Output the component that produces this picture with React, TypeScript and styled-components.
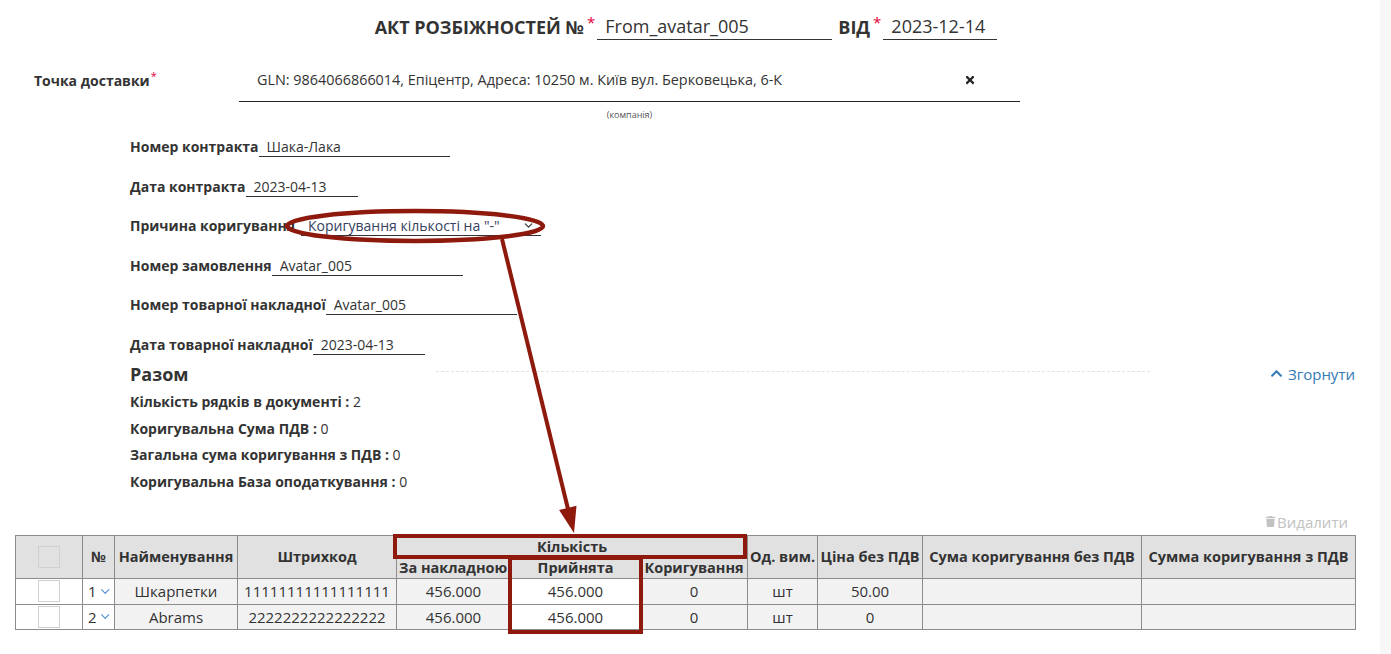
import React from "react";
import styled, { createGlobalStyle } from "styled-components";
import { FaTimes, FaChevronUp, FaTrash } from "react-icons/fa";
import { ChevronDown } from "lucide-react";

const Global = createGlobalStyle`
  html, body { margin: 0; padding: 0; background: #fff; }
  body { font-family: "Open Sans", "Noto Sans", sans-serif; color: #333; font-size: 14px; }
  * { box-sizing: border-box; }
`;

const Shell = styled.div`
  display: flex;
  width: 1391px;
  height: 654px;
  overflow: hidden;
`;

const Main = styled.div`
  position: relative;
  width: 1380px;
  height: 654px;
`;

const ScrollTrack = styled.div`
  width: 11px;
  height: 654px;
  background: #f7f7f8;
`;

const TitleRow = styled.div`
  display: flex;
  justify-content: center;
  align-items: flex-end;
  height: 28px;
  margin-top: 12px;
  padding-right: 8px;
`;

const TitleText = styled.h1`
  margin: 0;
  font-size: 18px;
  font-weight: 700;
  line-height: 26px;
  color: #333;
  white-space: nowrap;
`;

const TitleStar = styled.span`
  color: #e4003a;
  font-size: 15px;
  line-height: 16px;
  margin: 0 2px 10px 3px;
`;

const Star = styled.sup`
  color: #e4003a;
  font-size: 11px;
  font-weight: 400;
  line-height: 0;
  vertical-align: 6px;
  margin-left: 1px;
`;

const TitleInput = styled.input<{ $w: number }>`
  width: ${(p) => p.$w}px;
  height: 27px;
  border: none;
  border-bottom: 1px solid #333;
  font-family: "Open Sans", sans-serif;
  font-size: 18px;
  line-height: 26px;
  color: #333;
  padding: 0 0 0 8px;
  outline: none;
  background: transparent;
`;

const TitleGap = styled.span`
  width: 6px;
`;

const DeliveryRow = styled.div`
  display: flex;
  align-items: center;
  margin-top: 18px;
  height: 44px;
  padding-left: 34px;
`;

const DeliveryLabel = styled.div`
  width: 205px;
  font-weight: 700;
  font-size: 14px;
  white-space: nowrap;
`;

const DeliveryBox = styled.div`
  display: flex;
  align-items: center;
  justify-content: space-between;
  width: 781px;
  height: 44px;
  border-bottom: 1px solid #222;
  padding: 0 44px 0 18px;
  font-size: 14.4px;
  color: #333;
`;

const ClearIcon = styled(FaTimes)`
  width: 12px;
  height: 12px;
  color: #222;
`;

const Hint = styled.div`
  margin-top: 7px;
  width: 781px;
  margin-left: 239px;
  text-align: center;
  font-size: 9px;
  line-height: 12px;
  color: #555;
`;

const Fields = styled.div`
  display: flex;
  flex-direction: column;
  gap: 19.5px;
  margin-top: 16px;
  padding-left: 130px;
`;

const FieldRow = styled.div`
  display: flex;
  align-items: flex-end;
  height: 20px;
`;

const FieldLabel = styled.span`
  font-weight: 700;
  font-size: 14px;
  line-height: 20px;
  white-space: nowrap;
`;

const FieldInput = styled.input<{ $w: number }>`
  width: ${(p) => p.$w}px;
  height: 20px;
  border: none;
  border-bottom: 1px solid #333;
  font-family: "Open Sans", sans-serif;
  font-size: 14px;
  line-height: 19px;
  color: #333;
  padding: 0 0 0 8px;
  outline: none;
  background: transparent;
`;

const SelectWrap = styled.div`
  position: relative;
  width: 240px;
  height: 20px;
  margin-left: 6px;
  border-bottom: 1px solid #333;
`;

const Select = styled.select`
  appearance: none;
  width: 100%;
  height: 19px;
  border: none;
  background: transparent;
  font-family: "Open Sans", sans-serif;
  font-size: 14px;
  color: #34415e;
  padding: 0 0 0 7px;
  outline: none;
`;

const SelectChevron = styled(ChevronDown)`
  position: absolute;
  right: 6px;
  top: 3px;
  color: #333;
`;

const TotalHead = styled.div`
  display: flex;
  align-items: center;
  height: 24px;
  margin-top: 7px;
  padding-left: 130px;
  padding-right: 25px;
`;

const TotalTitle = styled.h2`
  margin: 0;
  font-size: 18px;
  font-weight: 700;
  line-height: 24px;
  width: 56px;
`;

const Dotted = styled.div`
  flex: 1;
  margin: 9px 120px 0 250px;
  border-top: 1px dashed #e2e2e2;
  align-self: flex-start;
`;

const Collapse = styled.a`
  display: flex;
  align-items: center;
  gap: 5px;
  font-size: 15px;
  color: #337ab7;
  text-decoration: none;
  cursor: pointer;
`;

const Summary = styled.div`
  margin-top: 3.5px;
  padding-left: 130px;
`;

const SumLine = styled.div`
  height: 26.7px;
  line-height: 26px;
  font-size: 14px;
  white-space: nowrap;
`;

const SumKey = styled.b`
  font-weight: 700;
`;

const DeleteRow = styled.div`
  display: flex;
  justify-content: flex-end;
  margin-top: 16px;
  padding-right: 32px;
  height: 20px;
`;

const DeleteBtn = styled.span`
  display: flex;
  align-items: center;
  gap: 1px;
  font-size: 15px;
  color: #c2c2c2;
`;

const Table = styled.table`
  margin: 3px 0 0 15px;
  width: 1340px;
  table-layout: fixed;
  border-collapse: collapse;
  font-size: 15px;
  color: #333;
`;

const Th = styled.th`
  background: #e1e1e1;
  border: 1px solid #8c8c8c;
  font-size: 14.5px;
  font-weight: 700;
  text-align: center;
  padding: 0 2px;
  white-space: nowrap;
  overflow: hidden;
  line-height: 18px;
`;

const HeadRow = styled.tr<{ $h: number }>`
  height: ${(p) => p.$h}px;
`;

const BodyRow = styled.tr<{ $h: number }>`
  height: ${(p) => p.$h}px;
`;

const Td = styled.td<{ $edit?: boolean }>`
  background: ${(p) => (p.$edit ? "#fff" : "#f2f2f2")};
  border: 1px solid #8c8c8c;
  text-align: center;
  padding: 0 4px;
  white-space: nowrap;
  overflow: hidden;
  line-height: 18px;
`;

const NumCell = styled.div`
  display: flex;
  align-items: center;
  gap: 1px;
  padding-left: 3px;
  color: #333;
`;

const Box = styled.span<{ $head?: boolean }>`
  display: inline-block;
  width: 22px;
  height: 22px;
  border: 1px solid #d2d0cc;
  background: ${(p) => (p.$head ? "transparent" : "#fff")};
  vertical-align: middle;
`;

const Overlay = styled.svg`
  position: absolute;
  left: 0;
  top: 0;
  pointer-events: none;
`;

const rows = [
  { n: 1, name: "Шкарпетки", code: "11111111111111111", inv: "456.000", acc: "456.000", cor: "0", unit: "шт", price: "50.00", h: 26 },
  { n: 2, name: "Abrams", code: "2222222222222222", inv: "456.000", acc: "456.000", cor: "0", unit: "шт", price: "0", h: 25 },
];

const cols = [67, 32, 123, 159, 114, 130, 107, 70, 105, 219, 214];

const RED = "#8e1a0e";

export default function App() {
  return (
    <Shell>
      <Global />
      <Main>
        <TitleRow>
          <TitleText>АКТ РОЗБІЖНОСТЕЙ №</TitleText>
          <TitleStar>*</TitleStar>
          <TitleInput $w={235} readOnly value="From_avatar_005" />
          <TitleGap />
          <TitleText>ВІД</TitleText>
          <TitleStar>*</TitleStar>
          <TitleInput $w={114} readOnly value="2023-12-14" />
        </TitleRow>

        <DeliveryRow>
          <DeliveryLabel>
            Точка доставки<Star>*</Star>
          </DeliveryLabel>
          <DeliveryBox>
            <span>GLN: 9864066866014, Епіцентр, Адреса: 10250 м. Київ вул. Берковецька, 6-К</span>
            <ClearIcon />
          </DeliveryBox>
        </DeliveryRow>
        <Hint>(компанія)</Hint>

        <Fields>
          <FieldRow>
            <FieldLabel>Номер контракта</FieldLabel>
            <FieldInput $w={191} readOnly value="Шака-Лака" />
          </FieldRow>
          <FieldRow>
            <FieldLabel>Дата контракта</FieldLabel>
            <FieldInput $w={112} readOnly value="2023-04-13" />
          </FieldRow>
          <FieldRow>
            <FieldLabel>Причина коригування</FieldLabel>
            <SelectWrap>
              <Select defaultValue="minus">
                <option value="minus">Коригування кількості на "-"</option>
              </Select>
              <SelectChevron size={13} strokeWidth={2} />
            </SelectWrap>
          </FieldRow>
          <FieldRow>
            <FieldLabel>Номер замовлення</FieldLabel>
            <FieldInput $w={191} readOnly value="Avatar_005" />
          </FieldRow>
          <FieldRow>
            <FieldLabel>Номер товарної накладної</FieldLabel>
            <FieldInput $w={191} readOnly value="Avatar_005" />
          </FieldRow>
          <FieldRow>
            <FieldLabel>Дата товарної накладної</FieldLabel>
            <FieldInput $w={112} readOnly value="2023-04-13" />
          </FieldRow>
        </Fields>

        <TotalHead>
          <TotalTitle>Разом</TotalTitle>
          <Dotted />
          <Collapse>
            <FaChevronUp size={13} />
            Згорнути
          </Collapse>
        </TotalHead>

        <Summary>
          <SumLine>
            <SumKey>Кількість рядків в документі :</SumKey> 2
          </SumLine>
          <SumLine>
            <SumKey>Коригувальна Сума ПДВ :</SumKey> 0
          </SumLine>
          <SumLine>
            <SumKey>Загальна сума коригування з ПДВ :</SumKey> 0
          </SumLine>
          <SumLine>
            <SumKey>Коригувальна База оподаткування :</SumKey> 0
          </SumLine>
        </Summary>

        <DeleteRow>
          <DeleteBtn>
            <FaTrash size={11} />
            Видалити
          </DeleteBtn>
        </DeleteRow>

        <Table>
          <colgroup>
            {cols.map((w, i) => (
              <col key={i} style={{ width: w }} />
            ))}
          </colgroup>
          <thead>
            <HeadRow $h={23}>
              <Th rowSpan={2}>
                <Box $head />
              </Th>
              <Th rowSpan={2}>№</Th>
              <Th rowSpan={2}>Найменування</Th>
              <Th rowSpan={2}>Штрихкод</Th>
              <Th colSpan={3}>Кількість</Th>
              <Th rowSpan={2}>Од. вим.</Th>
              <Th rowSpan={2}>Ціна без ПДВ</Th>
              <Th rowSpan={2}>Сума коригування без ПДВ</Th>
              <Th rowSpan={2}>Сумма коригування з ПДВ</Th>
            </HeadRow>
            <HeadRow $h={20}>
              <Th style={{ textAlign: "left" }}>За накладною</Th>
              <Th>Прийнята</Th>
              <Th>Коригування</Th>
            </HeadRow>
          </thead>
          <tbody>
            {rows.map((r) => (
              <BodyRow key={r.n} $h={r.h}>
                <Td $edit>
                  <Box />
                </Td>
                <Td $edit style={{ padding: "0 2px" }}>
                  <NumCell>
                    {r.n}
                    <ChevronDown size={15} color="#4a8fd6" strokeWidth={1.8} />
                  </NumCell>
                </Td>
                <Td>{r.name}</Td>
                <Td>{r.code}</Td>
                <Td>{r.inv}</Td>
                <Td $edit>{r.acc}</Td>
                <Td>{r.cor}</Td>
                <Td>{r.unit}</Td>
                <Td>{r.price}</Td>
                <Td></Td>
                <Td></Td>
              </BodyRow>
            ))}
          </tbody>
        </Table>

        <Overlay width={1380} height={654}>
          <ellipse cx={415} cy={226} rx={128} ry={15} fill="none" stroke={RED} strokeWidth={4.5} />
          <line x1={502} y1={239} x2={568} y2={509} stroke={RED} strokeWidth={4} />
          <polygon points="576.5,505.7 559.1,509.9 574,533" fill={RED} />
          <rect x={395} y={536} width={350} height={21} fill="none" stroke={RED} strokeWidth={4} />
          <rect x={510} y={558} width={131} height={74} fill="none" stroke={RED} strokeWidth={4} />
        </Overlay>
      </Main>
      <ScrollTrack />
    </Shell>
  );
}
